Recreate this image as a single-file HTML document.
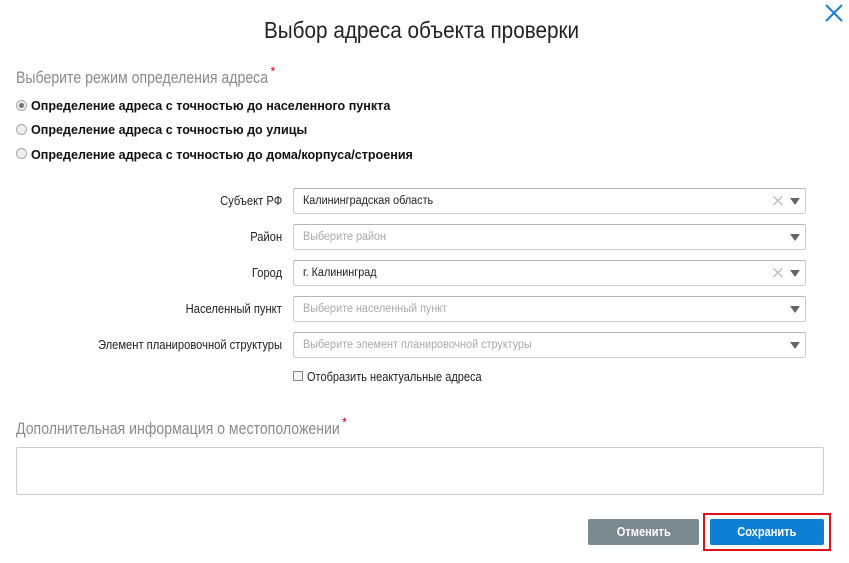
<!DOCTYPE html><html><head><meta charset="utf-8"><style>
body{margin:0;width:849px;height:563px;background:#fff;font-family:"Liberation Sans",sans-serif;position:relative;overflow:hidden;color:#222}
.a{position:absolute}
h1{position:absolute;top:17px;left:264px;margin:0;font-weight:normal;font-size:23px;color:#222;transform:scaleX(.9);transform-origin:left;white-space:nowrap}
.sec{font-size:17px;color:#8a8a8a;transform:scaleX(.83);transform-origin:left;white-space:nowrap}
.sec b{color:#d0021b;font-weight:normal;font-size:14px;vertical-align:top;position:relative;top:-5px;margin-left:3px}
.r{font-size:13px;font-weight:bold;color:#111;left:31px;transform:scaleX(.967);transform-origin:left;white-space:nowrap}
.rb{left:16px;width:9px;height:9px;border:1px solid #aaa;border-radius:50%;background:#eee}
.lbl{right:567px;font-size:13px;color:#222;text-align:right;transform:scaleX(.86);transform-origin:right;white-space:nowrap}
.f{left:293px;width:511px;height:24px;border:1px solid #ccc;border-top-color:#b5b5b5;border-radius:2px}
.f span{position:absolute;left:9px;top:6px;font-size:11.5px;transform:scaleX(.94);transform-origin:left;white-space:nowrap}
.ph{color:#aaa}
.tri{position:absolute;right:5px;top:9px;width:0;height:0;border-left:5px solid transparent;border-right:5px solid transparent;border-top:7px solid #666}
.x{position:absolute;right:20px;top:4px;color:#bbb;font-size:17px;line-height:16px;font-family:"DejaVu Sans";font-style:normal}
.btn{top:519px;height:26px;border-radius:2px;color:#fff;font-size:13px;font-weight:bold;text-align:center;line-height:26px}
.btn span{display:inline-block;transform:scaleX(.85)}
</style></head><body>
<h1>Выбор адреса объекта проверки</h1>
<svg class="a" style="left:823px;top:2px" width="22" height="22"><path d="M3 3L19 19M19 3L3 19" stroke="#1a7fd4" stroke-width="2"/></svg>
<div class="a sec" style="left:16px;top:68px">Выберите режим определения адреса<b>*</b></div>
<div class="a rb" style="top:100px"><div style="width:5px;height:5px;border-radius:50%;background:#777;margin:2px"></div></div>
<div class="a r" style="top:98px">Определение адреса с точностью до населенного пункта</div>
<div class="a rb" style="top:124px"></div>
<div class="a r" style="top:122px">Определение адреса с точностью до улицы</div>
<div class="a rb" style="top:148px"></div>
<div class="a r" style="top:147px">Определение адреса с точностью до дома/корпуса/строения</div>

<div class="a lbl" style="top:193px">Субъект РФ</div>
<div class="a f" style="top:188px"><span>Калининградская область</span><i class="x">×</i><i class="tri"></i></div>
<div class="a lbl" style="top:229px">Район</div>
<div class="a f" style="top:224px"><span class="ph">Выберите район</span><i class="tri"></i></div>
<div class="a lbl" style="top:265px">Город</div>
<div class="a f" style="top:260px"><span>г. Калининград</span><i class="x">×</i><i class="tri"></i></div>
<div class="a lbl" style="top:301px">Населенный пункт</div>
<div class="a f" style="top:296px"><span class="ph">Выберите населенный пункт</span><i class="tri"></i></div>
<div class="a lbl" style="top:337px">Элемент планировочной структуры</div>
<div class="a f" style="top:332px"><span class="ph">Выберите элемент планировочной структуры</span><i class="tri"></i></div>
<div class="a" style="left:293px;top:371px;width:8px;height:8px;border:1px solid #888;background:#f4f4f4"></div>
<div class="a" style="left:307px;top:370px;font-size:12.5px;transform:scaleX(.88);transform-origin:left;white-space:nowrap">Отобразить неактуальные адреса</div>

<div class="a sec" style="left:16px;top:419px">Дополнительная информация о местоположении<b>*</b></div>
<div class="a" style="left:16px;top:447px;width:806px;height:46px;border:1px solid #ccc;border-radius:2px"></div>
<div class="a" style="left:703px;top:513px;width:124px;height:34px;border:2px solid #e3101c"></div>
<div class="a btn" style="left:588px;width:111px;background:#7a8891"><span>Отменить</span></div>
<div class="a btn" style="left:710px;width:114px;background:#0f7fd6"><span>Сохранить</span></div>
</body></html>
